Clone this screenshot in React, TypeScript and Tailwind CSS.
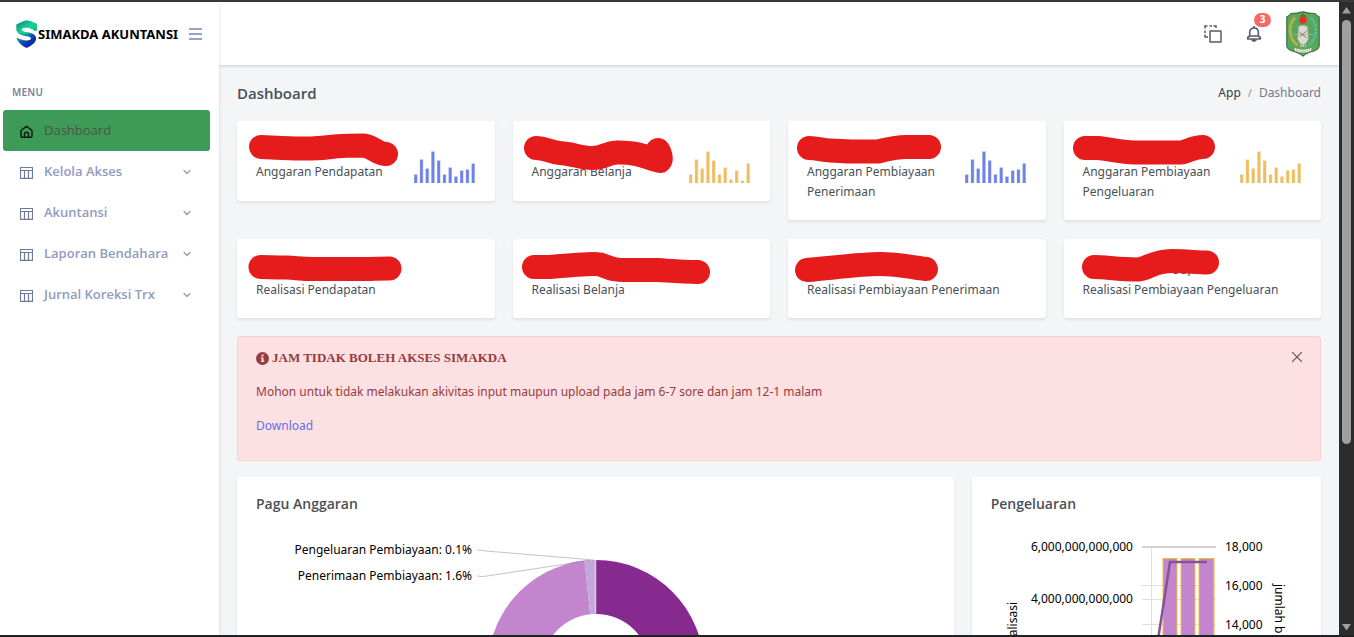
import React from "react";
import { ChevronDown, X } from "lucide-react";

type Tone = "indigo" | "amber";

interface Stat {
  label: string;
  mark: string;
  bars?: number[];
  tone?: Tone;
  value?: string;
}

const stats: Stat[] = [
  {
    label: "Anggaran Pendapatan",
    mark: "M24 26 L45 27 C70 28 80 28 98 25.5 C110 24.5 116 24.5 126 24.5 C136 25 140 33 149 33",
    bars: [9, 24, 15, 32, 23, 9, 16, 7, 13, 14, 20],
    tone: "indigo",
  },
  {
    label: "Anggaran Belanja",
    mark: "M23 27 C32 27 37 31 47 32 C60 33 68 37 79 37 C91 37 93 32 104 31.5 C125 31 132 36 147 40 C149 38 147 32 145 29",
    bars: [9, 24, 15, 32, 23, 9, 16, 4, 13, 3, 20],
    tone: "amber",
  },
  {
    label: "Anggaran Pembiayaan Penerimaan",
    mark: "M21 27 C30 27 34 29.500 42 29.500 C52 29.500 54 30.500 64 30.500 L90 30.500 C100 28 112 26 118 26 L141 26",
    bars: [9, 24, 15, 32, 23, 9, 16, 7, 13, 14, 20],
    tone: "indigo",
  },
  {
    label: "Anggaran Pembiayaan Pengeluaran",
    mark: "M21 27 L34 27 C45 28 60 31.500 74 31.500 L118 31.500 C127 29 130 26 139 26",
    bars: [9, 24, 15, 32, 23, 9, 16, 7, 13, 14, 20],
    tone: "amber",
  },
  {
    label: "Realisasi Pendapatan",
    mark: "M23.500 28 C32 28 36 28.500 50 28.500 C60 29 65 30 76 30 L133 30 C140 29.500 144 29.500 152.500 29.500",
  },
  {
    label: "Realisasi Belanja",
    mark: "M21 28 L37 28 C53 26.500 70 25 82 25 C94 25 92 31 112 31 L145 31 C160 32 170 33 185 33",
  },
  {
    label: "Realisasi Pembiayaan Penerimaan",
    mark: "M19 31 C44 29 72 25 92 25 C110 25 122 28 138 30",
  },
  {
    label: "Realisasi Pembiayaan Pengeluaran",
    mark: "M30 28 C42 28 54 30.500 74 30.500 C84 29.500 90 22 108 22 C124 22 132 23.500 143 23.500",
    value: "00,00",
  },
];

const menus = ["Kelola Akses", "Akuntansi", "Laporan Bendahara", "Jurnal Koreksi Trx"];

function Logo() {
  return (
    <svg width="22" height="28" viewBox="0 0 22 28" aria-hidden="true">
      <defs>
        <linearGradient id="lg1" x1="0" y1="0" x2="1" y2="1">
          <stop offset="0" stopColor="#0a7f86" />
          <stop offset="0.5" stopColor="#16d391" />
          <stop offset="1" stopColor="#0fb58a" />
        </linearGradient>
        <linearGradient id="lg2" x1="0.2" y1="0" x2="0.7" y2="1">
          <stop offset="0" stopColor="#1be08f" />
          <stop offset="0.45" stopColor="#1496b4" />
          <stop offset="0.8" stopColor="#0a2fb0" />
        </linearGradient>
      </defs>
      <path d="M0.500 4.500 L8 1 Q11 0 14 1 L21 4 V10 L19 11 C16 7.500 9 6.500 6 8.500 C5 10 6.500 11.500 9 12 L15 13 C20 14.500 21 18 19.500 21 C18 24 14 26.500 10.500 28 C5.500 25.500 1.500 22 0.500 17.500 C5 20 11 21.500 14.500 19.500 C16 18 14 16.700 11 16.200 C6 15.500 1.500 14.500 0.500 10Z" fill="url(#lg2)" />
      <path d="M0.500 4.500 L8 1 Q11 0 14 1 L21 4 V10 L19 11 C16 7.500 9 6.500 6 8.500 C5 10 6.500 11.500 9 12 L15 13 C10 15.500 1.500 14.500 0.500 10Z" fill="url(#lg1)" />
    </svg>
  );
}

function HomeIcon() {
  return (
    <svg width="13" height="14" viewBox="0 0 13 14" fill="none" stroke="#0c1a12" strokeWidth="1.400" strokeLinejoin="round" aria-hidden="true">
      <path d="M1 6.500 L6.500 2.200 L12 6.500 V12 Q12 13.300 10.800 13.300 H2.200 Q1 13.300 1 12Z" />
      <path d="M4.500 13.300 V9.500 Q4.500 8.500 5.500 8.500 H7.500 Q8.500 8.500 8.500 9.500 V13.300" />
    </svg>
  );
}

function TableIcon() {
  return (
    <svg width="13" height="14" viewBox="0 0 13 14" fill="none" stroke="#6f7a9a" strokeWidth="1.200" aria-hidden="true">
      <path d="M0.500 2.500 H12.500 V13.300 H0.500Z M0.500 5.500 H12.500 M4.500 5.500 V13.500 M8.500 5.500 V13.500" />
    </svg>
  );
}

function LayersIcon() {
  return (
    <svg width="18" height="18" viewBox="0 0 18 18" fill="none" stroke="#555b6d" strokeWidth="1.500" aria-hidden="true">
      <rect x="6" y="6" width="11" height="11" rx="0.500" />
      <path d="M1 3.500 V1 H3.500 M5.500 1 H8 M9.500 1 H12 V3 M1 5.500 V8 M1 9.500 V12 H4" />
    </svg>
  );
}

function BellIcon() {
  return (
    <svg width="16" height="18" viewBox="0 0 16 18" fill="none" stroke="#555b6d" strokeWidth="1.600" strokeLinejoin="round" aria-hidden="true">
      <path d="M8 1 V3" />
      <path d="M3.700 11 V7.500 C3.700 4.500 5.500 3 8 3 C10.500 3 12.300 4.500 12.300 7.500 V11 M3.700 11 L1.700 12.500 V14 H14.300 V12.500 L12.300 11Z" />
      <path d="M6 15 Q8 17.300 10 15Z" fill="#555b6d" />
    </svg>
  );
}

function Emblem() {
  return (
    <svg width="34" height="46" viewBox="0 0 34 46" aria-hidden="true">
      <path d="M5 2.500 Q11 2.500 17 0.800 Q23 2.500 29 2.500 Q31 5 33.200 6 V35 Q33 38 28 40 Q20 42 17 45 Q14 42 6 40 Q1 38 0.800 35 V6 Q3 5 5 2.500Z" fill="#5aa65c" stroke="#3c6f3d" strokeWidth="1.200" />
      <path d="M9 7 C2 13 2.500 28 11.500 34" fill="none" stroke="#c8b53c" strokeWidth="3" strokeDasharray="2 0.600" />
      <path d="M25 7 C32 13 31.500 28 22.500 34" fill="none" stroke="#55c9a5" strokeWidth="2.500" strokeDasharray="1.500 1" />
      <circle cx="17" cy="9" r="3.800" fill="#e03524" />
      <path d="M14.500 5.500 L17 3.500 L19.500 5.500" stroke="#a82016" fill="none" />
      <path d="M12.500 15.500 Q17 13 21.500 15.500 L22.500 28 Q20 34 17 34 Q14 34 11.500 28Z" fill="#dcd8d2" stroke="#9b9b91" strokeWidth="0.600" />
      <path d="M7 23.500 H27" stroke="#8fbd92" strokeWidth="0.800" />
      <path d="M13.500 26 L20.500 20 M13.500 21 L20.500 27" stroke="#85796a" strokeWidth="1" />
      <path d="M14 35 H20" stroke="#d8d8a0" strokeWidth="2" strokeDasharray="1.500 1" />
      <path d="M8.500 37 Q17 40.500 25.500 37 L25 40 Q17 43 9 40Z" fill="#f1efe7" />
      <path d="M10 38.900 Q17 41.500 24 38.900" stroke="#77836d" strokeWidth="1" strokeDasharray="1 1.200" fill="none" />
    </svg>
  );
}

function Sidebar() {
  return (
    <aside className="z-10 flex w-[219px] shrink-0 flex-col bg-white shadow-[0_0_4px_rgba(40,50,80,0.14)]">
      <div className="flex h-16 items-center pl-4">
        <Logo />
        <span className="w-[151px] pt-0.5 text-[13px] font-bold whitespace-nowrap text-black">SIMAKDA AKUNTANSI</span>
        <button type="button" aria-label="Menu" className="flex h-8 w-[13px] flex-col justify-center gap-[3px]">
          <span className="h-[2px] w-full bg-[#97a1c9]" />
          <span className="h-[2px] w-full bg-[#97a1c9]" />
          <span className="h-[2px] w-full bg-[#97a1c9]" />
        </button>
      </div>
      <p className="mt-4 pl-3 text-[10px] leading-5 font-semibold tracking-wide text-[#7c8299]">MENU</p>
      <nav className="mt-2 flex flex-col pr-[9px] pl-[3px] font-['Open_Sans',sans-serif] text-[13px] font-semibold">
        <a href="#dashboard" className="flex h-[41px] items-center gap-[11px] rounded-[3px] bg-[#3d9b57] pl-[17px] font-medium text-[#4b5548]">
          <HomeIcon />
          Dashboard
        </a>
        {menus.map((m) => (
          <a key={m} href="#menu" className="flex h-[41px] items-center gap-[11px] pr-[17px] pl-[17px] text-[#919bc0]">
            <TableIcon />
            <span className="flex-1">{m}</span>
            <ChevronDown size={12} strokeWidth={2.5} />
          </a>
        ))}
      </nav>
    </aside>
  );
}

function Bars({ data, tone }: { data: number[]; tone: Tone }) {
  return (
    <svg width="61" height="32" viewBox="0 0 61 32" className="mt-[11px] shrink-0" aria-hidden="true">
      {data.map((h, i) => (
        <g key={i} fill={tone === "indigo" ? "#6f83e6" : "#f0bc62"}>
          <rect x={i * 5.75} y={32 - h} width="3.600" height={h} opacity="0.400" />
          <rect x={i * 5.75 + 0.3} y={33 - h} width="2.700" height={h - 1} />
        </g>
      ))}
    </svg>
  );
}

function StatCard({ stat }: { stat: Stat }) {
  return (
    <section className="relative flex items-start rounded-[3px] bg-white pt-[19px] pr-5 pb-[18px] pl-[19px] shadow-[0_2px_3px_#dfe1e8]">
      <div className="min-w-0 flex-1">
        <p className="h-[22px] pl-[89px] text-[14px] leading-[22px] text-[#495057]">{stat.value}</p>
        <p className="leading-5 text-[#495057]">{stat.label}</p>
      </div>
      {stat.bars && stat.tone && <Bars data={stat.bars} tone={stat.tone} />}
      <svg width="200" height="60" viewBox="0 0 200 60" className="absolute top-0 left-0" aria-hidden="true">
        <path d={stat.mark} fill="none" stroke="#e61c1c" strokeWidth="24" strokeLinecap="round" strokeLinejoin="round" />
      </svg>
    </section>
  );
}

function Donut() {
  return (
    <svg width="500" height="260" viewBox="0 0 500 260" className="overflow-visible text-[12px]" role="img" aria-label="Pagu Anggaran">
      <path d="M340 36 A108 108 0 0 1 340 252 L340 198 A54 54 0 0 0 340 90Z" fill="#862a90" />
      <path d="M340 252 A108 108 0 0 1 328.500 36.600 L334.200 90.300 A54 54 0 0 0 340 198Z" fill="#c485cf" />
      <path d="M328.500 36.600 A108 108 0 0 1 339.300 36 L339.300 90 A54 54 0 0 0 334.200 90.300Z" fill="#c3a9da" />
      <path d="M339.500 36 V90" stroke="#dfc8e4" strokeWidth="1.500" />
      <path d="M221 26 Q225 26 230 27 L338 36 M221 52 Q226 53 231 52 L310 40 Q322 37 334 36.500" fill="none" stroke="#888" strokeOpacity="0.500" />
      <text x="216" y="30" textAnchor="end" fill="#000">Pengeluaran Pembiayaan: 0.1%</text>
      <text x="216" y="56" textAnchor="end" fill="#000">Penerimaan Pembiayaan: 1.6%</text>
    </svg>
  );
}

function SpendingChart() {
  return (
    <svg width="300" height="260" viewBox="0 0 300 260" className="overflow-visible text-[12px]" role="img" aria-label="Pengeluaran">
      <path d="M151 61.500 H225 M151 75.500 H225 M151 100.500 H225 M160.500 23 V260" stroke="#e0e0e0" fill="none" />
      <path d="M151 23 H225" stroke="#d2d2d2" strokeWidth="2" />
      <g fill="#c485cf" stroke="#efc22d">
        <rect x="172" y="34.500" width="14" height="226" />
        <rect x="190" y="34.500" width="14" height="226" />
        <rect x="208" y="34.500" width="15" height="226" />
      </g>
      <path d="M160 161 L179 38 H216" fill="none" stroke="#85529a" strokeWidth="2.500" />
      <g fill="#000">
        <text x="142" y="27" textAnchor="end">6,000,000,000,000</text>
        <text x="142" y="79" textAnchor="end">4,000,000,000,000</text>
        <text x="234" y="27">18,000</text>
        <text x="234" y="66">16,000</text>
        <text x="234" y="105">14,000</text>
        <text transform="translate(26 78) rotate(-90)" textAnchor="end">realisasi</text>
        <text transform="translate(284 60) rotate(90)">jumlah b</text>
      </g>
    </svg>
  );
}

function ScrollBar() {
  return (
    <div className="flex w-[15px] shrink-0 flex-col items-center justify-between bg-[#2c2c2c] py-1" aria-hidden="true">
      <svg width="9" height="8" viewBox="0 0 9 8"><path d="M4.500 1 L9 7.500 H0Z" fill="#9f9f9f" /></svg>
      <div className="mt-[6px] w-[9px] flex-[424] rounded-full bg-[#9f9f9f]" />
      <div className="flex-[179]" />
      <svg width="9" height="8" viewBox="0 0 9 8"><path d="M0 1 H9 L4.500 7.500Z" fill="#9f9f9f" /></svg>
    </div>
  );
}

export default function App() {
  return (
    <div className="flex h-screen overflow-hidden border-t-2 border-b-2 border-t-[#3a383a] border-b-[#202124] bg-[#f4f5f7] font-['Noto_Sans',sans-serif] text-[12px]">
      <Sidebar />
      <div className="flex min-w-0 flex-1 flex-col">
        <header className="flex h-[63px] shrink-0 items-center justify-end bg-white pr-[19px] shadow-[0_1px_3px_rgba(40,50,80,0.2)]">
          <button type="button" aria-label="Aplikasi" className="mr-6"><LayersIcon /></button>
          <button type="button" aria-label="Notifikasi" className="relative mr-6">
            <BellIcon />
            <span className="absolute -top-[12px] left-2 flex h-[14px] w-[17px] items-center justify-center rounded-full bg-[#f96868] text-[10px] font-bold text-white">3</span>
          </button>
          <button type="button" aria-label="Profil"><Emblem /></button>
        </header>
        <main className="flex min-h-0 flex-1 flex-col overflow-hidden px-[18px]">
          <div className="flex h-14 shrink-0 items-center justify-between">
            <h1 className="font-['Open_Sans',sans-serif] text-[15px] font-semibold text-[#495057]">Dashboard</h1>
            <nav className="flex items-center gap-[7px]" aria-label="Breadcrumb">
              <a href="#app" className="text-[#343a46]">App</a>
              <span className="text-[11px] text-[#8a8fa0]">/</span>
              <span className="text-[#74788d]">Dashboard</span>
            </nav>
          </div>
          <div className="grid shrink-0 grid-cols-4 items-start gap-x-[18px] gap-y-[19px]">
            {stats.map((s) => <StatCard key={s.label} stat={s} />)}
          </div>
          <section className="mt-[18px] flex shrink-0 items-start justify-between rounded-[3px] border border-[#fccfd0] bg-[#fde0e1] px-[18px] pt-[11px] pb-[10px] text-[#963c3f]">
            <div>
              <h2 className="flex items-center gap-[3px] font-['Liberation_Serif',serif] text-[13px] leading-5 font-bold">
                <svg width="13" height="13" viewBox="0 0 13 13" aria-hidden="true">
                  <circle cx="6.500" cy="6.500" r="6.500" fill="#963c3f" />
                  <path d="M5.500 2.500 H7.500 V4.500 H5.500Z M4.800 5.500 H7.500 V8.800 H8.300 V10 H4.800 V8.800 H5.600 V6.700 H4.800Z" fill="#fde0e1" />
                </svg>
                JAM TIDAK BOLEH AKSES SIMAKDA
              </h2>
              <p className="mt-[14px] leading-5">Mohon untuk tidak melakukan akivitas input maupun upload pada jam 6-7 sore dan jam 12-1 malam</p>
              <p className="my-[14px] leading-5"><a href="#download" className="text-[#5b73e8]">Download</a></p>
            </div>
            <button type="button" aria-label="Tutup" className="-mr-1 text-[#6c5d60]"><X size={18} strokeWidth={1.5} /></button>
          </section>
          <div className="mt-4 grid shrink-0 grid-cols-3 gap-[18px]">
            <section className="col-span-2 rounded-[3px] bg-white px-[19px] pt-[17px] pb-5 shadow-[0_2px_3px_#dfe1e8]">
              <h2 className="mb-[10px] font-['Open_Sans',sans-serif] text-[14px] leading-5 font-semibold text-[#495057]">Pagu Anggaran</h2>
              <Donut />
            </section>
            <section className="rounded-[3px] bg-white px-[19px] pt-[17px] pb-5 shadow-[0_2px_3px_#dfe1e8]">
              <h2 className="mb-[10px] font-['Open_Sans',sans-serif] text-[14px] leading-5 font-semibold text-[#495057]">Pengeluaran</h2>
              <SpendingChart />
            </section>
          </div>
        </main>
      </div>
      <ScrollBar />
    </div>
  );
}
